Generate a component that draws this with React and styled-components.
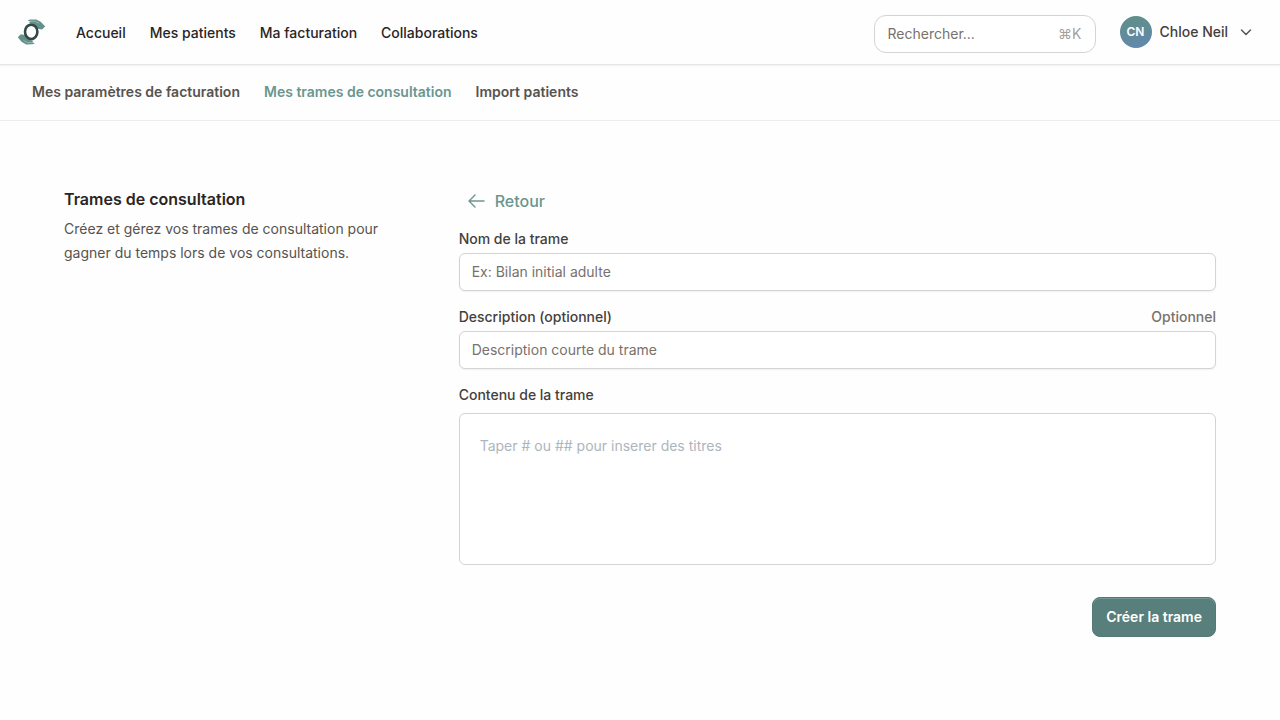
import React, { useState } from 'react';
import styled, { createGlobalStyle } from 'styled-components';

const GlobalStyle = createGlobalStyle`
  *, *::before, *::after {
    box-sizing: border-box;
  }

  body {
    margin: 0;
    background: #fefefe;
    color: #292524;
    font-family: Inter, "Liberation Sans", sans-serif;
    font-size: 14px;
    line-height: 20px;
  }

  input, textarea, button {
    font: inherit;
  }
`;

const Header = styled.header`
  display: flex;
  align-items: center;
  height: 65px;
  padding: 0 24px 0 16px;
  border-bottom: 1px solid #e5e5e4;
  box-shadow: 0 1px 2px rgba(0, 0, 0, 0.05);
`;

const Logo = styled.a`
  display: flex;
  margin-right: 28px;
`;

const MainNav = styled.nav`
  display: flex;
  flex: 1;
  gap: 24px;
  padding-top: 2px;
`;

const NavLink = styled.a`
  color: #292524;
  font-weight: 500;
  text-decoration: none;
`;

const Search = styled.label`
  display: flex;
  align-items: center;
  width: 222px;
  height: 38px;
  margin: 4px 24px 0 0;
  padding: 0 13px;
  border: 1px solid #d6d3d1;
  border-radius: 12px;
  background: #fff;

  input {
    flex: 1;
    min-width: 0;
    padding: 0;
    border: 0;
    outline: 0;
    background: transparent;
  }

  input::placeholder {
    color: #78716c;
    opacity: 1;
  }

  kbd {
    color: #a3a09d;
    font-family: inherit;
  }
`;

const Profile = styled.button`
  display: flex;
  align-items: center;
  gap: 8px;
  padding: 0;
  border: 0;
  background: none;
  color: #44403c;
  font-weight: 500;
  cursor: pointer;
`;

const Avatar = styled.span`
  display: grid;
  place-items: center;
  width: 32px;
  height: 32px;
  border-radius: 50%;
  background: linear-gradient(170deg, #5f8f8a 10%, #6288ab 90%);
  color: #fff;
  font-size: 12px;
  font-weight: 600;
`;

const SubNav = styled.nav`
  display: flex;
  align-items: center;
  gap: 24px;
  height: 56px;
  padding: 0 32px 2px;
  border-bottom: 1px solid #efeeed;
`;

const SubLink = styled.a`
  color: ${({ $active }) => ($active ? '#6b9690' : '#57534e')};
  font-weight: 600;
  text-decoration: none;
`;

const Main = styled.main`
  display: grid;
  grid-template-columns: repeat(3, minmax(0, 1fr));
  gap: 32px;
  padding: 64px;
`;

const Title = styled.h1`
  margin: 0 0 4px;
  color: #292524;
  font-size: 16px;
  font-weight: 600;
  line-height: 28px;
`;

const Intro = styled.p`
  margin: 0;
  color: #57534e;
  line-height: 24px;
`;

const Form = styled.form`
  grid-column: span 2;
  display: flex;
  flex-direction: column;
  gap: 16px;
`;

const Back = styled.a`
  display: flex;
  align-items: center;
  align-self: flex-start;
  gap: 8px;
  height: 32px;
  margin-bottom: -4px;
  padding: 0 8px;
  color: #6b9690;
  font-size: 16px;
  font-weight: 500;
  text-decoration: none;
`;

const Field = styled.div`
  display: flex;
  flex-direction: column;
  gap: ${({ $editor }) => ($editor ? '8px' : '4px')};
`;

const FieldHead = styled.div`
  display: flex;
  justify-content: space-between;
  color: #78716c;
  font-weight: 500;

  label {
    color: #44403c;
  }
`;

const Input = styled.input`
  width: 100%;
  height: 38px;
  padding: 0 12px 2px;
  border: 1px solid #d6d3d1;
  border-radius: 6px;
  background: #fff;
  box-shadow: 0 1px 2px rgba(0, 0, 0, 0.06);

  &::placeholder {
    color: #78716c;
    opacity: 1;
  }
`;

const Editor = styled.textarea`
  display: block;
  width: 100%;
  height: 152px;
  padding: 20px;
  border: 1px solid #d6d3d1;
  border-radius: 6px;
  background: #fff;
  line-height: 24px;
  resize: none;

  &::placeholder {
    color: #adb5bd;
    opacity: 1;
  }
`;

const Submit = styled.button`
  align-self: flex-end;
  height: 40px;
  margin-top: 16px;
  padding: 0 13px;
  border: 1px solid #527a76;
  border-radius: 8px;
  background: #587f7b;
  box-shadow: inset 0 1px 0 #6f9893;
  color: #fff;
  font-weight: 600;
  cursor: pointer;
`;

const LogoMark = () => (
  <svg width="32" height="32" viewBox="0 0 32 32" aria-hidden="true">
    <g fill="#64908b">
      <path d="M11.5 4.6 14 3.6 20.3 3.4 25 6 29.2 10.6 26 13.4 20.5 12.6 17.5 8 12.8 7 14.5 5.6Z" />
      <path d="M19 27.2 16.5 28.2 10.2 28.4 5.5 25.8 1.8 21.2 4.8 18.2 10 19.2 13 23.8 17.7 24.8 16 26.2Z" />
    </g>
    <path d="M14 5.1 19.2 5.200 23 7.400M16.500 26.700 11.300 26.600 7.500 24.400" fill="none" stroke="#b3cbc8" strokeWidth=".6" />
    <ellipse cx="15.2" cy="15.8" rx="6.2" ry="7.2" fill="#fefefe" stroke="#354747" strokeWidth="2.6" />
  </svg>
);

const links = ['Accueil', 'Mes patients', 'Ma facturation', 'Collaborations'];
const subLinks = ['Mes paramètres de facturation', 'Mes trames de consultation', 'Import patients'];

function App() {
  const [search, setSearch] = useState('');
  const [name, setName] = useState('');
  const [description, setDescription] = useState('');
  const [content, setContent] = useState('');

  return (
    <>
      <GlobalStyle />
      <Header>
        <Logo href="#" aria-label="Accueil"><LogoMark /></Logo>
        <MainNav>
          {links.map(link => <NavLink href="#" key={link}>{link}</NavLink>)}
        </MainNav>
        <Search>
          <input type="text" placeholder="Rechercher..." aria-label="Rechercher" value={search} onChange={e => setSearch(e.target.value)} />
          <kbd>⌘K</kbd>
        </Search>
        <Profile type="button">
          <Avatar>CN</Avatar>
          Chloe Neil
          <svg width="20" height="20" viewBox="0 0 20 20" fill="none" stroke="#57534e" strokeWidth="1.5" strokeLinecap="round" strokeLinejoin="round">
            <path d="M5.5 8l4.500 4.500L14.500 8" />
          </svg>
        </Profile>
      </Header>

      <SubNav>
        {subLinks.map((link, index) => (
          <SubLink href="#" key={link} $active={index === 1}>{link}</SubLink>
        ))}
      </SubNav>

      <Main>
        <section>
          <Title>Trames de consultation</Title>
          <Intro>Créez et gérez vos trames de consultation pour gagner du temps lors de vos consultations.</Intro>
        </section>

        <Form onSubmit={e => e.preventDefault()}>
          <Back href="#">
            <svg width="20" height="20" viewBox="0 0 20 20" fill="none" stroke="currentColor" strokeWidth="1.4" strokeLinecap="round" strokeLinejoin="round">
              <path d="M8 4L2 10l6 6M2 10h15" />
            </svg>
            Retour
          </Back>

          <Field>
            <FieldHead><label htmlFor="name">Nom de la trame</label></FieldHead>
            <Input id="name" type="text" placeholder="Ex: Bilan initial adulte" value={name} onChange={e => setName(e.target.value)} />
          </Field>

          <Field>
            <FieldHead>
              <label htmlFor="description">Description (optionnel)</label>
              <span>Optionnel</span>
            </FieldHead>
            <Input id="description" type="text" placeholder="Description courte du trame" value={description} onChange={e => setDescription(e.target.value)} />
          </Field>

          <Field $editor>
            <FieldHead><label htmlFor="content">Contenu de la trame</label></FieldHead>
            <Editor id="content" placeholder="Taper # ou ## pour inserer des titres" value={content} onChange={e => setContent(e.target.value)} />
          </Field>

          <Submit type="submit">Créer la trame</Submit>
        </Form>
      </Main>
    </>
  );
}

export default App;
